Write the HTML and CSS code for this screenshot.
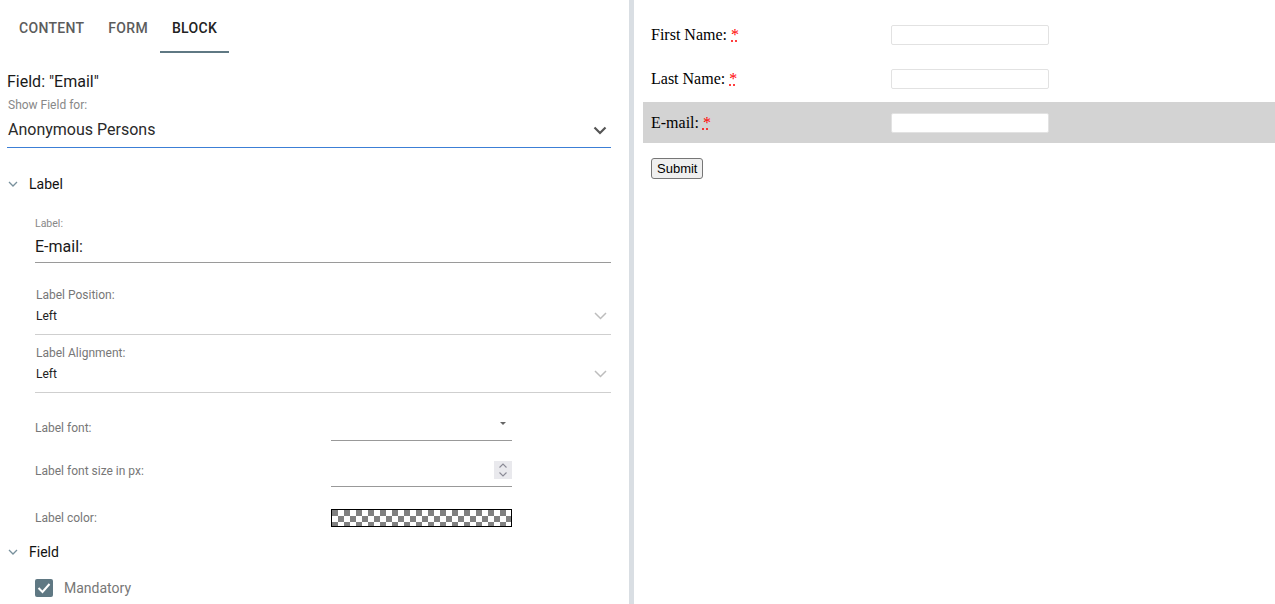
FILE: index.html
```html
<!DOCTYPE html>
<html lang="en">
<head>
    <meta charset="UTF-8">
    <meta name="viewport" content="width=device-width, initial-scale=1.0">
    <title>Form Block Editor</title>
    <link rel="stylesheet" href="styles.css">
</head>
<body>
    <div class="editor">
        <div class="settings">
            <div class="tabs">
                <div class="tab">Content</div>
                <div class="tab">Form</div>
                <div class="tab active">Block</div>
            </div>

            <div class="field-title">Field: "Email"</div>
            <div class="small-label">Show Field for:</div>
            <div class="main-select">
                <span>Anonymous Persons</span>
                <svg width="14" height="9" viewBox="0 0 14 9"><path d="M1.5 1.5 L7 7 L12.5 1.5" fill="none" stroke="#555" stroke-width="2.2"/></svg>
            </div>

            <div class="section-head">
                <svg width="10" height="6" viewBox="0 0 10 6"><path d="M1 1 L5 5 L9 1" fill="none" stroke="#78909c" stroke-width="1.3"/></svg>
                <span>Label</span>
            </div>

            <div class="section-body">
                <div class="text-field">
                    <div class="tiny-label">Label:</div>
                    <div class="text-value">E-mail:</div>
                </div>

                <div class="drop-field first">
                    <div class="drop-label">Label Position:</div>
                    <div class="drop-value">
                        <span>Left</span>
                        <svg width="13" height="8" viewBox="0 0 13 8"><path d="M1 1 L6.5 6.5 L12 1" fill="none" stroke="#bdbdbd" stroke-width="1.5"/></svg>
                    </div>
                </div>

                <div class="drop-field">
                    <div class="drop-label">Label Alignment:</div>
                    <div class="drop-value">
                        <span>Left</span>
                        <svg width="13" height="8" viewBox="0 0 13 8"><path d="M1 1 L6.5 6.5 L12 1" fill="none" stroke="#bdbdbd" stroke-width="1.5"/></svg>
                    </div>
                </div>

                <div class="prop-row font-row">
                    <div class="prop-label">Label font:</div>
                    <div class="prop-control select-control">
                        <span class="caret"></span>
                    </div>
                </div>

                <div class="prop-row size-row">
                    <div class="prop-label">Label font size in px:</div>
                    <div class="prop-control number-control">
                        <span class="spinner">
                            <svg width="10" height="16" viewBox="0 0 10 16"><path d="M1.5 5.5 L5 2 L8.5 5.5 M1.5 10.5 L5 14 L8.5 10.5" fill="none" stroke="#8a8a96" stroke-width="1.1"/></svg>
                        </span>
                    </div>
                </div>

                <div class="prop-row color-row">
                    <div class="prop-label">Label color:</div>
                    <div class="color-swatch"></div>
                </div>
            </div>

            <div class="section-head field-head">
                <svg width="10" height="6" viewBox="0 0 10 6"><path d="M1 1 L5 5 L9 1" fill="none" stroke="#78909c" stroke-width="1.3"/></svg>
                <span>Field</span>
            </div>

            <div class="section-body">
                <div class="check-row">
                    <span class="checkbox">
                        <svg width="14" height="12" viewBox="0 0 14 12"><path d="M1.5 6 L5.5 10 L12.5 2" fill="none" stroke="#fff" stroke-width="2"/></svg>
                    </span>
                    <span class="check-text">Mandatory</span>
                </div>
            </div>
        </div>

        <div class="splitter"></div>

        <div class="preview">
            <div class="form-row">
                <label class="form-label">First Name: <abbr title="required">*</abbr></label>
                <input class="form-input" type="text">
            </div>
            <div class="form-row">
                <label class="form-label">Last Name: <abbr title="required">*</abbr></label>
                <input class="form-input" type="text">
            </div>
            <div class="form-row selected">
                <label class="form-label">E-mail: <abbr title="required">*</abbr></label>
                <input class="form-input" type="text">
            </div>
            <button class="submit-btn">Submit</button>
        </div>
    </div>
</body>
</html>
```

FILE: styles.css
```css
html, body {
    margin: 0;
    padding: 0;
    height: 100%;
    background: #fff;
}
body {
    font-family: Roboto, "Liberation Sans", Arial, sans-serif;
    overflow: hidden;
}
.editor {
    display: flex;
    height: 604px;
}
.settings {
    width: 604px;
    padding: 0 18px 0 7px;
    flex-shrink: 0;
}
.splitter {
    width: 5px;
    background: #d9dee3;
    flex-shrink: 0;
}
.preview {
    flex: 1;
    padding: 14px 0 0 9px;
}

/* tabs */
.tabs {
    display: flex;
    height: 53px;
}
.tab {
    padding: 20px 12px 0;
    box-sizing: border-box;
    height: 53px;
    font-size: 14px;
    line-height: 16px;
    font-weight: 500;
    letter-spacing: 0.3px;
    text-transform: uppercase;
    color: #5c5c5c;
}
.tab.active {
    color: #222;
    border-bottom: 2px solid #5f7883;
}

.field-title {
    margin-top: 19px;
    font-size: 16px;
    line-height: 20px;
    color: #1a1a1a;
}
.small-label {
    margin-top: 6px;
    font-size: 12px;
    line-height: 14px;
    color: #888;
    padding-left: 1px;
}
.main-select {
    display: flex;
    justify-content: space-between;
    align-items: center;
    padding: 8px 4px 7px 1px;
    font-size: 16px;
    line-height: 20px;
    color: #2a2a2a;
    border-bottom: 1px solid #3c7fd6;
}

/* sections */
.section-head {
    display: flex;
    align-items: center;
    margin-top: 26px;
    font-size: 14px;
    line-height: 20px;
    color: #111;
}
.section-head svg {
    margin: 0 11px 0 1px;
}
.field-head {
    margin-top: 15px;
}
.section-body {
    padding-left: 28px;
}

.text-field {
    margin-top: 23px;
    border-bottom: 1px solid #9a9a9a;
    padding-bottom: 5px;
}
.tiny-label {
    font-size: 10.5px;
    line-height: 13px;
    color: #888;
}
.text-value {
    margin-top: 7px;
    font-size: 16px;
    line-height: 20px;
    color: #1a1a1a;
}

.drop-field {
    margin-top: 11px;
    border-bottom: 1px solid #cfcfcf;
    padding: 0 4px 11px 1px;
}
.drop-field.first {
    margin-top: 25px;
}
.drop-label {
    font-size: 12px;
    line-height: 14px;
    color: #777;
}
.drop-value {
    display: flex;
    justify-content: space-between;
    align-items: center;
    margin-top: 7px;
    font-size: 12px;
    line-height: 14px;
    color: #222;
}

/* property rows */
.prop-row {
    display: flex;
    align-items: center;
}
.prop-label {
    width: 296px;
    font-size: 12px;
    line-height: 14px;
    color: #777;
}
.prop-control {
    width: 181px;
    box-sizing: border-box;
    border-bottom: 1px solid #999;
    display: flex;
    justify-content: flex-end;
}
.font-row {
    margin-top: 18px;
}
.font-row .prop-label {
    margin-top: 4px;
}
.select-control {
    height: 30px;
    padding-top: 11px;
    padding-right: 6px;
    box-sizing: border-box;
}
.caret {
    width: 0;
    height: 0;
    border-left: 3px solid transparent;
    border-right: 3px solid transparent;
    border-top: 3px solid #666;
}
.size-row {
    margin-top: 17px;
}
.size-row .prop-label {
    margin-bottom: 4px;
}
.number-control {
    height: 29px;
    padding-top: 3px;
    box-sizing: border-box;
}
.spinner {
    width: 18px;
    height: 18px;
    background: #e9e9ed;
    display: flex;
    align-items: center;
    justify-content: center;
}
.color-row {
    margin-top: 22px;
}
.color-swatch {
    width: 181px;
    height: 18px;
    box-sizing: border-box;
    border: 1px solid #000;
    background: repeating-conic-gradient(#fff 0 25%, #808080 0 50%) 0 0 / 12px 12px;
}

.check-row {
    display: flex;
    align-items: center;
    margin-top: 17px;
}
.checkbox {
    width: 18px;
    height: 18px;
    border-radius: 2px;
    background: #5f7883;
    display: flex;
    align-items: center;
    justify-content: center;
    margin-right: 11px;
}
.check-text {
    font-size: 14px;
    color: #777;
}

/* preview form */
.form-row {
    display: flex;
    align-items: center;
    height: 41px;
    padding: 0 8px;
    margin-bottom: 3px;
}
.form-row.selected {
    background: #d3d3d3;
}
.form-label {
    width: 240px;
    font-family: "Liberation Serif", "Times New Roman", serif;
    font-size: 16px;
    color: #000;
}
.form-label abbr {
    color: red;
    text-decoration: underline dotted;
}
.form-input {
    width: 158px;
    height: 20px;
    box-sizing: border-box;
    border: 1px solid #e2e2e2;
    border-radius: 2px;
    background: #fff;
    padding: 0 3px;
}
.submit-btn {
    margin: 12px 0 0 8px;
    font-family: "Liberation Sans", Arial, sans-serif;
    font-size: 13px;
    padding: 1px 5px;
    height: 21px;
    border: 1px solid #767676;
    border-radius: 3px;
    background: #efefef;
    color: #000;
}
```
